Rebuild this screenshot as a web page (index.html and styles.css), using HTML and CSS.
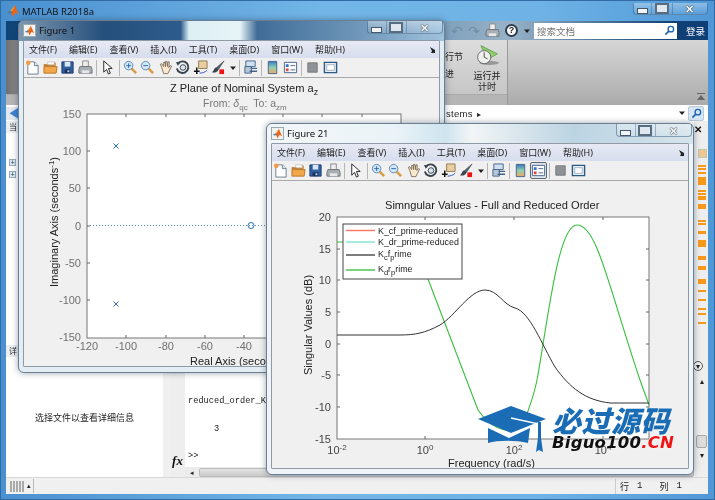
FILE: index.html
```html
<!DOCTYPE html>
<html lang="zh">
<head>
<meta charset="utf-8">
<title>MATLAB R2018a</title>
<link rel="stylesheet" href="styles.css">
</head>
<body>
<svg class="defs" width="0" height="0">
  <defs>
    <symbol id="i-ml" viewBox="0 0 16 16"><path d="M1 10l4-2 2-2 3-5c1 2 3 8 5 11-2-1-3-2-4-2-1 1-2 3-3 5-1-3-2-5-3-6z" fill="#e8661c"/><path d="M5 8l2-2 3-5c-1 3-2 5-3 7z" fill="#f9b233"/><path d="M1 10l4-2 2 1-2 2z" fill="#3f7fb5"/></symbol>
    <symbol id="i-new" viewBox="0 0 16 16"><path d="M3 2h7l4 4v9H3z" fill="#fff" stroke="#6b7d8f"/><path d="M10 2v4h4" fill="#dfe8f0" stroke="#6b7d8f"/><circle cx="3.500" cy="3" r="2.500" fill="#f29a4a"/></symbol>
    <symbol id="i-open" viewBox="0 0 16 16"><path d="M1 5h5l1-2h6v3H1z" fill="#f5c46c" stroke="#b8752a"/><path d="M1 7h14l-1 7H1z" fill="#f3a64a" stroke="#b8752a"/><path d="M5 2h7v3H5z" fill="#fff" stroke="#aaa" stroke-width=".6"/></symbol>
    <symbol id="i-save" viewBox="0 0 16 16"><path d="M2 2h12v12H2z" fill="#2f5f9f" stroke="#1f3f70"/><path d="M5 2h6v5H5z" fill="#d9e6f5"/><path d="M5 10h6v4H5z" fill="#16315c"/><path d="M8 11h2v2H8z" fill="#cfd9e6"/></symbol>
    <symbol id="i-print" viewBox="0 0 16 16"><path d="M5 1h6v6H5z" fill="#eee" stroke="#888"/><path d="M2 7h12l1 3v4H1v-4z" fill="#a9aeb4" stroke="#6f7479"/><path d="M4 11h8v3H4z" fill="#e7e7e7"/></symbol>
    <symbol id="i-arrow" viewBox="0 0 16 16"><path d="M4 1v12l3-3 2 5 2-1-2-5h4z" fill="#fff" stroke="#222"/></symbol>
    <symbol id="i-zin" viewBox="0 0 16 16"><path d="M9 9l5 5" stroke="#d99a45" stroke-width="2.600"/><circle cx="6" cy="6" r="4.500" fill="#d3e7f8" stroke="#5b86b0"/><path d="M3.500 6h5M6 3.500v5" stroke="#2767a8"/></symbol>
    <symbol id="i-zout" viewBox="0 0 16 16"><path d="M9 9l5 5" stroke="#d99a45" stroke-width="2.600"/><circle cx="6" cy="6" r="4.500" fill="#d3e7f8" stroke="#5b86b0"/><path d="M3.500 6h5" stroke="#2767a8"/></symbol>
    <symbol id="i-hand" viewBox="0 0 16 16"><path d="M4 8L2.500 4.500 4 4l2 3V2.500h1.500L8 7V1.500h1.500L10 7l.5-5H12l-.5 6 1.500-2 1.500.5-2.500 5-1.500 3H6z" fill="#fbe9cf" stroke="#77664f" stroke-width=".9"/></symbol>
    <symbol id="i-rot" viewBox="0 0 16 16"><path d="M3 4a6.200 6.200 0 1 1-1 5" fill="none" stroke="#39434e" stroke-width="2"/><path d="M1 2l5 .5L3 6z" fill="#39434e"/><circle cx="8.500" cy="8" r="3" fill="#dbe4ec" stroke="#39434e"/></symbol>
    <symbol id="i-dc" viewBox="0 0 16 16"><path d="M6 1h9v8H6z" fill="#e9cf9f" stroke="#8c7a55"/><path d="M4 8v7M1 12h6" stroke="#111" stroke-width="1.600"/><path d="M7 14c3 0 6-1 8-3" fill="none" stroke="#2f4fc0"/></symbol>
    <symbol id="i-brush" viewBox="0 0 16 16"><path d="M15 1L7 8l2 2z" fill="#56626e" stroke="#39434e" stroke-width=".6"/><path d="M7 8c-3 0-2 3-5 5 3 1 6 0 7-3z" fill="#39434e"/><path d="M10 10h5v5h-5z" fill="#ee1111"/></symbol>
    <symbol id="i-link" viewBox="0 0 16 16"><path d="M3 1h10v6H3z" fill="#cfe0f0" stroke="#44648a"/><path d="M2 8h7v7H2z" fill="#b8c8d8" stroke="#44648a" transform="translate(0 -1)"/><path d="M7 12h8M8 9h7" stroke="#44648a" stroke-width="1.400"/></symbol>
    <symbol id="i-cbar" viewBox="0 0 16 16"><defs><linearGradient id="g-cb" x1="0" y1="0" x2="0" y2="1"><stop offset="0" stop-color="#3b78c4"/><stop offset=".5" stop-color="#8fd0b0"/><stop offset="1" stop-color="#f0a860"/></linearGradient></defs><path d="M3.500 1.500h9v13h-9z" fill="url(#g-cb)" stroke="#44648a"/></symbol>
    <symbol id="i-leg" viewBox="0 0 16 16"><path d="M1.500 2.500h13v11h-13z" fill="#fff" stroke="#44648a"/><path d="M3 4.500h3v3H3z" fill="#3a6fd0"/><path d="M3 9h3v3H3z" fill="#e0483c"/><path d="M8 6h5M8 10.500h5" stroke="#44648a"/></symbol>
    <symbol id="i-sq" viewBox="0 0 16 16"><path d="M3 3h10v10H3z" fill="#8f9397" stroke="#777"/></symbol>
    <symbol id="i-dock" viewBox="0 0 16 16"><path d="M1.500 2.500h13v11h-13z" fill="#e8eef4" stroke="#2c5a86" stroke-width="1.500"/><path d="M4 5h8v6H4z" fill="#fff" stroke="#7d97ad" stroke-width=".7"/></symbol>
    <symbol id="i-caret" viewBox="0 0 8 8"><path d="M1 2.500h6L4 6z" fill="#222"/></symbol>
    <symbol id="i-search" viewBox="0 0 16 16"><circle cx="10" cy="6" r="4" fill="none" stroke="#1c64b4" stroke-width="2"/><path d="M7 9l-5 5" stroke="#1c64b4" stroke-width="2.400"/></symbol>
    <symbol id="i-grip" viewBox="0 0 8 8"><path d="M2 1l5 3v3H3l1-2z" fill="#222"/></symbol>
  </defs>
</svg>

<div class="desk">
  <div class="main">
    <header class="main-title">
      <svg class="ml-icon"><use href="#i-ml"/></svg>
      <span>MATLAB R2018a</span>
    </header>
    <div class="frame-btns main-btns"><i class="wb wb-min"></i><i class="wb wb-max"></i><i class="wb wb-close">✕</i></div>

    <div class="qa">
      <span class="qa-glyph">↶</span><span class="qa-glyph">↷</span>
      <svg class="qa-print"><use href="#i-print"/></svg>
      <span class="qa-help">?</span>
      <svg class="caret"><use href="#i-caret"/></svg>
      <div class="search">
        <span>搜索文档</span>
        <svg class="search-ic"><use href="#i-search"/></svg>
      </div>
      <span class="login">登录</span>
    </div>

    <div class="ribbon">
      <div class="rib-left">
        <div class="rib-texts"><span>运行节</span><span>前进</span></div>
        <div class="rib-run">
          <svg class="run-ic" viewBox="0 0 30 28">
            <path d="M7 2l20 10-12 7z" fill="#8fcf6a" stroke="#5e9c48"/>
            <ellipse cx="17" cy="23" rx="12" ry="2.500" fill="#999"/>
            <circle cx="11" cy="16" r="8" fill="#eef0ee" stroke="#555"/>
            <path d="M11 10v6l4 2" fill="none" stroke="#333"/>
          </svg>
          <span>运行并</span><span>计时</span>
        </div>
      </div>
      <div class="rib-right"><span class="collapse"></span></div>
    </div>

    <div class="addr">
      <span class="back">◀</span>
      <span class="addr-path">stems<em>▸</em></span>
      <svg class="caret"><use href="#i-caret"/></svg>
      <span class="addr-btn"><svg class="search-ic"><use href="#i-search"/></svg></span>
    </div>

    <div class="work">
      <aside class="left">
        <div class="l-head">当</div>
        <div class="l-tree"><span class="plus">+</span><span class="plus">+</span></div>
        <div class="l-head">详</div>
        <div class="l-detail">选择文件以查看详细信息</div>
      </aside>
      <section class="cmd">
        <div class="gutter"><span class="fx">fx</span></div>
        <div class="cmd-main">
          <div class="cmd-text">
            <p>reduced_order_K</p>
            <p class="blank">&nbsp;</p>
            <p class="val">3</p>
            <p class="blank">&nbsp;</p>
            <p>&gt;&gt;</p>
          </div>
          <div class="hscroll"><span class="hs-arrow">◂</span><span class="hs-thumb"></span></div>
        </div>
      </section>
      <aside class="strip">
        <span class="strip-x">✕</span>
        <span class="strip-ok"></span>
        <svg class="marks" width="10" height="170" viewBox="0 0 10 170">
          <g fill="#f79a1c">
            <rect y="0" width="8" height="2"/><rect y="3" width="8" height="2"/><rect y="7" width="8" height="2"/>
            <rect y="12" width="8" height="8"/><rect y="25" width="8" height="2"/><rect y="28" width="8" height="2"/><rect y="31" width="8" height="4"/>
            <rect y="39" width="8" height="5"/><rect y="55" width="8" height="2"/><rect y="58" width="8" height="2"/><rect y="66" width="8" height="3"/>
            <rect y="75" width="8" height="7"/><rect y="91" width="8" height="4"/><rect y="101" width="8" height="4"/><rect y="114" width="8" height="5"/>
            <rect y="125" width="8" height="2"/><rect y="134" width="8" height="2"/><rect y="143" width="8" height="2"/><rect y="148" width="8" height="2"/><rect y="157" width="8" height="2"/>
          </g>
        </svg>
        <span class="strip-circle">▾</span>
        <span class="strip-up">▴</span>
        <span class="strip-thumb"></span>
        <span class="strip-down">▾</span>
      </aside>
    </div>

    <footer class="status">
      <div class="grip-l"><i></i><i></i><i></i><i></i><i></i><em>▴</em></div>
      <div class="pos"><span>行</span><span>1</span><span class="pos-c">列</span><span>1</span></div>
    </footer>
  </div>

  <!-- Figure 1 -->
  <div class="fig fig1">
    <div class="fig-title">
      <span class="fig-icon"><svg><use href="#i-ml"/></svg></span>
      <span>Figure 1</span>
    </div>
    <div class="frame-btns"><i class="wb wb-min"></i><i class="wb wb-max"></i><i class="wb wb-close">✕</i></div>
    <div class="client">
      <nav class="menu">
        <span>文件(F)</span><span>编辑(E)</span><span>查看(V)</span><span>插入(I)</span><span>工具(T)</span><span>桌面(D)</span><span>窗口(W)</span><span>帮助(H)</span>
        <svg class="menu-grip"><use href="#i-grip"/></svg>
      </nav>
      <div class="tb">
        <svg class="ti"><use href="#i-new"/></svg><svg class="ti"><use href="#i-open"/></svg><svg class="ti"><use href="#i-save"/></svg><svg class="ti"><use href="#i-print"/></svg>
        <i class="sep"></i>
        <svg class="ti"><use href="#i-arrow"/></svg>
        <i class="sep"></i>
        <svg class="ti"><use href="#i-zin"/></svg><svg class="ti"><use href="#i-zout"/></svg><svg class="ti"><use href="#i-hand"/></svg><svg class="ti"><use href="#i-rot"/></svg><svg class="ti"><use href="#i-dc"/></svg><svg class="ti"><use href="#i-brush"/></svg>
        <svg class="tcaret"><use href="#i-caret"/></svg>
        <i class="sep"></i>
        <svg class="ti"><use href="#i-link"/></svg>
        <i class="sep"></i>
        <svg class="ti"><use href="#i-cbar"/></svg><svg class="ti"><use href="#i-leg"/></svg>
        <i class="sep"></i>
        <svg class="ti"><use href="#i-sq"/></svg><svg class="ti"><use href="#i-dock"/></svg>
      </div>
      <svg class="plot" viewBox="24 78 415 288">
        <text class="t-title" x="170" y="92">Z Plane of Nominal System a<tspan class="t-sub" dy="3">z</tspan></text>
        <text class="t-io" x="203" y="107">From: <tspan font-style="italic">δ</tspan><tspan class="t-sub2" dy="3">qc</tspan><tspan dy="-3">  To: a</tspan><tspan class="t-sub2" dy="3">zm</tspan></text>
        <rect class="ax" x="87" y="114" width="314" height="224"/>
        <path class="tick" d="M126 114v3M166 114v3M205 114v3M244 114v3M283 114v3M322 114v3M362 114v3M126 338v-3M166 338v-3M205 338v-3M244 338v-3M87 151h3M87 188h3M87 226h3M87 263h3M87 300h3"/>
        <g class="t-y">
          <text x="81" y="118">150</text><text x="81" y="155">100</text><text x="81" y="192">50</text><text x="81" y="230">0</text><text x="81" y="267">-50</text><text x="81" y="304">-100</text><text x="81" y="341">-150</text>
        </g>
        <g class="t-x">
          <text x="87" y="350">-120</text><text x="126" y="350">-100</text><text x="166" y="350">-80</text><text x="205" y="350">-60</text><text x="244" y="350">-40</text>
        </g>
        <text class="t-label" x="190" y="365">Real Axis (seconds<tspan>⁻¹</tspan>)</text>
        <text class="t-label" transform="translate(58 287) rotate(-90)">Imaginary Axis (seconds<tspan dy="-4" font-size="8">-1</tspan><tspan dy="4">)</tspan></text>
        <path class="zero" d="M87 225.500H401"/>
        <path class="mark" d="M113.500 143.500l5 5m0-5l-5 5M113.500 301.500l5 5m0-5l-5 5"/>
        <circle class="mark" cx="251" cy="225.500" r="3"/>
      </svg>
    </div>
  </div>

  <!-- Figure 21 -->
  <div class="fig fig21">
    <div class="fig-title">
      <span class="fig-icon"><svg><use href="#i-ml"/></svg></span>
      <span>Figure 21</span>
    </div>
    <div class="frame-btns"><i class="wb wb-min"></i><i class="wb wb-max"></i><i class="wb wb-close">✕</i></div>
    <div class="client">
      <nav class="menu">
        <span>文件(F)</span><span>编辑(E)</span><span>查看(V)</span><span>插入(I)</span><span>工具(T)</span><span>桌面(D)</span><span>窗口(W)</span><span>帮助(H)</span>
        <svg class="menu-grip"><use href="#i-grip"/></svg>
      </nav>
      <div class="tb">
        <svg class="ti"><use href="#i-new"/></svg><svg class="ti"><use href="#i-open"/></svg><svg class="ti"><use href="#i-save"/></svg><svg class="ti"><use href="#i-print"/></svg>
        <i class="sep"></i>
        <svg class="ti"><use href="#i-arrow"/></svg>
        <i class="sep"></i>
        <svg class="ti"><use href="#i-zin"/></svg><svg class="ti"><use href="#i-zout"/></svg><svg class="ti"><use href="#i-hand"/></svg><svg class="ti"><use href="#i-rot"/></svg><svg class="ti"><use href="#i-dc"/></svg><svg class="ti"><use href="#i-brush"/></svg>
        <svg class="tcaret"><use href="#i-caret"/></svg>
        <i class="sep"></i>
        <svg class="ti"><use href="#i-link"/></svg>
        <i class="sep"></i>
        <svg class="ti"><use href="#i-cbar"/></svg><span class="ti-on"><svg class="ti"><use href="#i-leg"/></svg></span>
        <i class="sep"></i>
        <svg class="ti"><use href="#i-sq"/></svg><svg class="ti"><use href="#i-dock"/></svg>
      </div>
      <svg class="plot" viewBox="272 181 416 287">
        <text class="t-title" x="385" y="209">Simngular Values - Full and Reduced Order</text>
        <rect class="ax" x="337" y="217" width="312" height="222"/>
        <path class="tick" d="M425 217v3M514 217v3M603 217v3M425 439v-3M514 439v-3M603 439v-3M337 249h3M337 280h3M337 312h3M337 344h3M337 375h3M337 407h3M649 249h-3M649 280h-3M649 312h-3M649 344h-3M649 375h-3M649 407h-3"/>
        <path class="c-green" d="M337 242L385 242C402 242 416 254 428 279L478 410C490 427 504 433 515 429C522 426 525 418 528 411C533 397 535 390 537 380C548 320 558 225 577 225C597 225 608 285 640 380L649 405"/>
        <path class="c-black" d="M337 335L400 335C415 335 425 333 440 325C455 316 470 290 485 290C498 290 503 305 515 308C530 312 542 345 555 367C570 388 585 400 610 403L649 403"/>
        <g class="t-y">
          <text x="331" y="221">20</text><text x="331" y="253">15</text><text x="331" y="284">10</text><text x="331" y="316">5</text><text x="331" y="348">0</text><text x="331" y="379">-5</text><text x="331" y="411">-10</text><text x="331" y="443">-15</text>
        </g>
        <g class="t-x">
          <text x="337" y="454">10<tspan class="t-sup" dy="-4">-2</tspan></text>
          <text x="425" y="454">10<tspan class="t-sup" dy="-4">0</tspan></text>
          <text x="514" y="454">10<tspan class="t-sup" dy="-4">2</tspan></text>
          <text x="603" y="454">10<tspan class="t-sup" dy="-4">4</tspan></text>
        </g>
        <text class="t-label" x="448" y="467">Frequency (rad/s)</text>
        <text class="t-label" transform="translate(312 375) rotate(-90)">Singular Values (dB)</text>
        <rect class="legend" x="343" y="224" width="119" height="55"/>
        <path class="l-red" d="M346 230.500h29"/>
        <path class="l-cyan" d="M346 242h29"/>
        <path class="l-black" d="M346 255h29"/>
        <path class="l-green" d="M346 270h29"/>
        <g class="t-leg">
          <text x="378" y="234">K_cf_prime-reduced</text>
          <text x="378" y="245">K_dr_prime-reduced</text>
          <text x="378" y="257">K<tspan dy="3" font-size="7.500">c</tspan><tspan dy="-3">f</tspan><tspan dy="3" font-size="7.500">p</tspan><tspan dy="-3">rime</tspan></text>
          <text x="378" y="272">K<tspan dy="3" font-size="7.500">d</tspan><tspan dy="-3">r</tspan><tspan dy="3" font-size="7.500">p</tspan><tspan dy="-3">rime</tspan></text>
        </g>
      </svg>
    </div>
  </div>

  <!-- Watermark -->
  <div class="wm">
    <svg class="wm-cap" viewBox="0 0 70 50">
      <path d="M10 24v15c10 -3 28 -3 40 0l2-15-21 10z" fill="#1a6db5"/>
      <path d="M0 15L33 2l35 13-35 14z" fill="#1a6db5"/>
      <path d="M33 14l28 6v12" fill="none" stroke="#fff" stroke-width="1.500"/>
      <path d="M60 18h3v16l2 14-4-2-3 2 2-14z" fill="#1a6db5"/>
    </svg>
    <div class="wm-text">
      <div class="wm-cn">必过源码</div>
      <div class="wm-en">Biguo100<span>.CN</span></div>
    </div>
  </div>
</div>
</body>
</html>
```

FILE: styles.css
```css
* { box-sizing: border-box; }
html, body { margin: 0; padding: 0; }
body { width: 715px; height: 500px; overflow: hidden; background: #5fa6dc; font-family: "Noto Sans", "Noto Sans CJK SC", sans-serif; color: #222; }
.defs { position: absolute; }
.desk { position: relative; width: 715px; height: 500px; overflow: hidden; filter: blur(.3px); }

/* main MATLAB window */
.main { width: 715px; height: 500px; display: flex; flex-direction: column; padding: 0 7px 6px 6px; background: linear-gradient(90deg, #4a90d0 0, #72b5e6 45%, #6fb3e6 75%, #4f97d6 100%); box-shadow: inset 0 0 0 1px #2f6ca5; }
.main-title { height: 21px; margin: 0 -6px; padding: 1px 0 0 6px; display: flex; align-items: center; gap: 2px; font-size: 9.500px; color: #111; flex: none; }
.ml-icon { width: 14px; height: 14px; }
.main-btns { top: 3px; right: 7px; width: 75px; height: 12px; }

.frame-btns { position: absolute; display: flex; border: 1px solid rgba(40, 80, 120, .5); border-top: 0; border-radius: 0 0 4px 4px; background: linear-gradient(rgba(255,255,255,.35), rgba(255,255,255,.05)); }
.wb { display: flex; align-items: center; justify-content: center; font-style: normal; font-size: 11px; line-height: 1; font-weight: 700; color: #f3f6f8; text-shadow: 0 0 1px #222, 0 0 1px #222; border-right: 1px solid rgba(40, 80, 120, .35); }
.wb-min { width: 25%; flex: none; }
.wb-max { width: 28%; flex: none; }
.wb-close { flex: 1; border-right: 0; }
.wb-min::after { content: ""; width: 9px; height: 4px; margin-top: 5px; border: 1px solid #46596c; background: #f2f5f7; }
.wb-max::after { content: ""; width: 10px; height: 7px; border: 2px solid #5a6d80; background: #dfe8ef; }

.qa { height: 19px; flex: none; background: linear-gradient(90deg, #0f4478 0, #7f9fbb 62%, #98b3c8 72%, #0f3f74 95%); display: flex; align-items: center; padding-left: 442px; color: #7d95aa; font-size: 14px; }
.qa-glyph { width: 17px; text-align: center; color: #6f8ca4; line-height: 1; }
.qa-print { width: 15px; height: 15px; margin-left: 3px; }
.qa-help { width: 13px; height: 13px; margin-left: 5px; border-radius: 50%; background: #fff; border: 2px solid #2f3e4e; font: 700 9px/9px "Liberation Sans", sans-serif; color: #222; text-align: center; }
.caret { width: 8px; height: 8px; margin-left: 5px; flex: none; }
.search { width: 143px; height: 16px; margin-left: 3px; background: #fff; display: flex; align-items: center; justify-content: space-between; padding: 0 2px 0 3px; font-size: 9.500px; color: #777; white-space: nowrap; }
.search-ic { width: 11px; height: 11px; }
.login { margin-left: 9px; font-size: 9.500px; color: #fff; white-space: nowrap; }

.ribbon { height: 65px; flex: none; display: flex; background: #b5b5b5; }
.rib-left { width: 501px; height: 55px; display: flex; justify-content: flex-end; gap: 10px; background: linear-gradient(90deg, #6f6f6f 0, #8a8a8a 12px, transparent 12px), linear-gradient(#ddd, #c6c6c6); font-size: 9px; color: #222; padding-right: 6px; border-bottom: 1px solid #aaa; }
.rib-texts { display: flex; flex-direction: column; gap: 7px; padding-top: 12px; line-height: 10px; white-space: nowrap; }
.rib-run { display: flex; flex-direction: column; align-items: center; line-height: 11px; padding-top: 4px; width: 28px; white-space: nowrap; }
.run-ic { width: 25px; height: 23px; margin-bottom: 3px; flex: none; }
.rib-right { flex: 1; height: 65px; background: linear-gradient(#d6d6d6, #ababab); position: relative; border-left: 1px solid #999; display: flex; align-items: flex-end; justify-content: flex-end; padding: 0 3px 6px 0; }
.collapse { width: 8px; height: 6px; border-top: 1px solid #666; position: relative; }
.collapse::after { content: ""; position: absolute; left: 0; top: 1px; border: 4px solid transparent; border-top: 0; border-bottom: 5px solid #666; }

.addr { height: 16px; flex: none; background: #fff; display: flex; align-items: center; font: 9.500px "Liberation Sans", sans-serif; position: relative; }
.back { width: 14px; color: #3d83d0; font-size: 13px; line-height: 1; text-align: center; background: #e4e8ee; flex: none; }
.addr-path { margin-left: 426px; width: 232px; color: #222; letter-spacing: .3px; }
.addr-path em { font-style: normal; margin-left: 4px; font-size: 8px; }
.addr .caret { margin-left: 0; }
.addr-btn { width: 16px; height: 15px; margin-left: 2px; background: #d7e6f4; border: 1px solid #b8c9d8; border-radius: 2px; display: flex; align-items: center; justify-content: center; }

.work { flex: 1; min-height: 0; display: flex; background: #f0f0f0; }
.left { width: 157px; flex: none; display: flex; flex-direction: column; background: #fff; }
.l-head { height: 12px; background: #eceef2; font-size: 8px; line-height: 12px; flex: none; overflow: hidden; padding-left: 3px; width: 100%; white-space: nowrap; }
.l-tree { height: 212px; flex: none; display: flex; flex-direction: column; gap: 5px; padding: 26px 0 0 3px; }
.plus { width: 7px; height: 7px; border: 1px solid #9ab; background: #dde8f2; font: 7px/5px "Liberation Sans", sans-serif; text-align: center; color: #245; }
.l-detail { flex: 1; display: flex; align-items: center; justify-content: center; font-size: 9px; background: #fff; }

.cmd { flex: 1; min-width: 0; margin-left: 7px; display: flex; background: #fff; }
.gutter { width: 15px; flex: none; background: #eee; display: flex; align-items: flex-end; justify-content: center; padding-bottom: 9px; }
.fx { font: italic 700 13px/14px "Liberation Serif", serif; color: #111; }
.cmd-main { flex: 1; min-width: 0; display: flex; flex-direction: column; justify-content: flex-end; }
.cmd-text { padding: 0 0 3px 3px; font: 8.670px/13.800px "Liberation Mono", monospace; color: #222; }
.cmd-text p { margin: 0; white-space: nowrap; }
.val { padding-left: 26px; }
.hscroll { height: 10px; flex: none; display: flex; background: #ececec; align-items: center; }
.hs-arrow { width: 14px; font-size: 7px; text-align: center; color: #222; }
.hs-thumb { flex: 1; height: 9px; background: linear-gradient(#e4e4e4, #c9c9c9); border: 1px solid #bbb; border-radius: 2px; }

.strip { width: 14px; flex: none; background: #eee; display: flex; flex-direction: column; align-items: center; padding-top: 3px; position: relative; font-size: 8px; line-height: 1; }
.strip-x { font-size: 10px; font-weight: 700; color: #111; align-self: flex-start; }
.strip-ok { width: 9px; height: 9px; margin: 15px 0 7px 3px; background: #eec88f; border: 1px solid #bcb; flex: none; }
.marks { margin-left: 4px; flex: none; }
.strip-circle { margin: 26px 0 0 -6px; width: 10px; height: 10px; border: 1px solid #555; border-radius: 50%; line-height: 7px; text-align: center; flex: none; }
.strip-up { margin: 6px 0 0 2px; color: #222; }
.strip-thumb { width: 11px; height: 13px; margin: 50px 0 0 0; background: #dcdcdc; border: 1px solid #aaa; border-radius: 2px; flex: none; }
.strip-down { margin: 3px 0 0 2px; color: #222; }

.status { height: 17px; flex: none; display: flex; align-items: center; justify-content: space-between; background: #f0f0f0; border-top: 1px solid #d8d8d8; }
.grip-l { display: flex; gap: 1px; height: 12px; align-items: center; padding-left: 4px; }
.grip-l i { width: 2px; height: 11px; background: #aaa; }
.grip-l em { font-style: normal; font-size: 7px; padding: 0 2px; border-right: 1px solid #bbb; line-height: 14px; }
.pos { width: 90px; height: 15px; display: flex; align-items: center; gap: 8px; padding-left: 4px; margin-right: 3px; font-size: 9px; border-left: 1px solid #ccc; font-family: "Liberation Mono", "Noto Sans CJK SC", monospace; }
.pos-c { margin-left: 9px; }

/* figure windows */
.fig { position: absolute; border: 1px solid #6a7f93; border-radius: 6px; padding: 0 4px 5px; display: flex; flex-direction: column; box-shadow: 0 0 6px rgba(30, 50, 70, .45); }
.fig1 { left: 18px; top: 20px; width: 427px; height: 353px; background: linear-gradient(90deg, #7d97b0 0, #254f7c 20%, #2d5c8c 38%, #dceff4 40%, #e6f4f6 52%, #3f6c98 56%, #6b93b6 78%, #9fc2dd 100%) no-repeat 0 0 / 100% 20px, #e3edf4; }
.fig21 { left: 266px; top: 123px; width: 428px; height: 352px; background: linear-gradient(90deg, #f3f6f8 0, #eaf3f7 30%, #cfe4ef 42%, #f2f5f6 48%, #bcd4e2 72%, #d6e4ec 100%) no-repeat 0 0 / 100% 20px, #eef4f8; }
.fig .frame-btns { top: 0; right: 1px; width: 76px; height: 13px; }
.fig-title { height: 19px; flex: none; display: flex; align-items: center; gap: 3px; font-size: 9.500px; color: #111; }
.fig-icon { width: 13px; height: 13px; background: #f2f2f2; border: 1px solid #9aa; display: flex; flex: none; }
.fig-icon svg { width: 11px; height: 11px; }
.client { flex: 1; min-height: 0; display: flex; flex-direction: column; background: #f0f0f0; border: 1px solid #8f9aa5; border-radius: 1px; }
.menu { height: 17px; flex: none; display: flex; align-items: center; gap: 12px; padding-left: 5px; font-size: 9px; color: #222; background: linear-gradient(#e7eaf4, #d7ddee); position: relative; white-space: nowrap; }
.menu-grip { width: 8px; height: 8px; margin-left: auto; margin-right: 3px; }
.tb { height: 20px; flex: none; display: flex; align-items: center; background: #f0f0f0; border-bottom: 1px solid #a9a9a9; }
.ti { width: 15px; height: 15px; margin: 0 1.250px; flex: none; }
.ti-on { width: 17.500px; height: 17.500px; display: flex; align-items: center; flex: none; border: 1px solid #5b6771; border-radius: 2px; background: #dfe6ee; }
.ti-on .ti { margin: 0 .25px; }
.sep { width: 5px; height: 16px; flex: none; position: relative; }
.sep::after { content: ""; position: absolute; left: 2px; top: 0; height: 16px; width: 1px; background: #b5b5b5; }
.tcaret { width: 8px; height: 8px; margin-left: 2px; flex: none; }
.plot { flex: 1; min-height: 0; width: 100%; display: block; background: #f0f0f0; font-family: "Liberation Sans", sans-serif; }

.t-title { font-size: 11.100px; fill: #222; }
.t-sub { font-size: 9px; }
.t-io { font-size: 10.500px; fill: #777; white-space: pre; }
.t-sub2 { font-size: 8px; }
.ax { fill: #fff; stroke: #777; stroke-width: 1; }
.tick { fill: none; stroke: #666; stroke-width: 1; }
.t-y text { font-size: 11px; fill: #444; text-anchor: end; }
.t-x text { font-size: 11px; fill: #444; text-anchor: middle; }
.fig1 .t-y text, .fig1 .t-x text { fill: #707070; }
.t-sup { font-size: 8px; }
.t-label { font-size: 11px; fill: #222; }
.zero { stroke: #5a8dbb; stroke-width: 1; stroke-dasharray: 1 2; fill: none; }
.mark { stroke: #2a6fb0; stroke-width: 1; fill: none; }
.c-green { fill: none; stroke: #36bf3d; stroke-width: 1.100; }
.c-black { fill: none; stroke: #333; stroke-width: 1; }
.legend { fill: #fff; stroke: #444; stroke-width: 1; }
.l-red { stroke: #ff7563; stroke-width: 1.400; }
.l-cyan { stroke: #8de8d6; stroke-width: 1.600; }
.l-black { stroke: #444; stroke-width: 1.400; }
.l-green { stroke: #3fc14a; stroke-width: 1.400; }
.t-leg text { font-size: 8.900px; fill: #222; }

/* watermark */
.wm { position: absolute; left: 478px; top: 404px; display: flex; gap: 4px; }
.wm-cap { width: 70px; height: 50px; flex: none; }
.wm-text { display: flex; flex-direction: column; }
.wm-cn { font: italic 900 29px/30px "Noto Sans CJK SC", sans-serif; color: #1a6db5; letter-spacing: .5px; text-shadow: 0 0 2px #fff; }
.wm-en { font: italic 700 16.500px/17px "DejaVu Sans", sans-serif; color: #111; letter-spacing: .2px; text-shadow: 0 0 2px #fff; }
.wm-en span { color: #f01515; }
```
